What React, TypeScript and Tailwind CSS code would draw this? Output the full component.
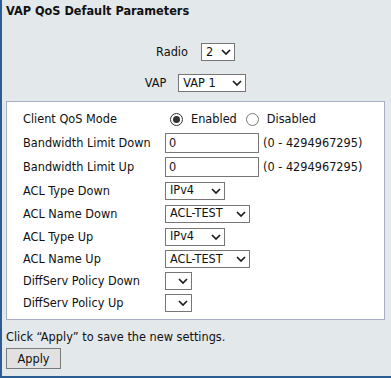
import React from "react";

function Chevron() {
  return (
    <svg width="10" height="6" viewBox="0 0 10 6" className="shrink-0">
      <path d="M1 1 L5 5 L9 1" fill="none" stroke="#1a1a1a" strokeWidth="1.7" />
    </svg>
  );
}

function Select({ value, w }: { value: string; w: string }) {
  return (
    <div className={`flex items-center justify-between h-[18px] border border-[#767676] bg-white pl-[4px] pr-[3px] ${w}`}>
      <span className="leading-none whitespace-nowrap">{value}</span>
      <Chevron />
    </div>
  );
}

function Radio({ checked }: { checked: boolean }) {
  return (
    <div
      className={`w-[13px] h-[13px] rounded-full border bg-white flex items-center justify-center ${
        checked ? "border-[#333333]" : "border-[#767676]"
      }`}
    >
      {checked && <div className="w-[7px] h-[7px] rounded-full bg-[#333333]" />}
    </div>
  );
}

function Row({ label, h, children }: { label: string; h: string; children: React.ReactNode }) {
  return (
    <div className={`flex items-center ${h}`}>
      <div className="w-[142px] shrink-0 whitespace-nowrap">{label}</div>
      <div className="flex items-center">{children}</div>
    </div>
  );
}

function TextInput({ value }: { value: string }) {
  return (
    <div className="w-[94px] h-[20px] border border-[#767676] bg-white flex items-center pl-[3px]">
      {value}
    </div>
  );
}

export default function App() {
  return (
    <div className="w-[391px] h-[378px] bg-[#e3e8eb] border-l-2 border-b-2 border-[#2b5d92] font-['DejaVu_Sans_Condensed',sans-serif] text-[12.6px] text-[#111111] leading-[16px] overflow-hidden">
      <div className="pt-[3px] pl-[4px] font-bold">VAP QoS Default Parameters</div>

      <div className="mt-[24px] flex justify-center items-center pr-[2px] h-[18px]">
        <span className="mr-[13px]">Radio</span>
        <Select value="2" w="w-[34px]" />
      </div>
      <div className="mt-[13px] flex justify-center items-center pr-[2px] h-[18px]">
        <span className="mr-[12px]">VAP</span>
        <Select value="VAP 1" w="w-[68px]" />
      </div>

      <div className="mt-[9px] ml-[4px] w-[379px] h-[219px] bg-white border border-[#a9adc6] pt-[5px] pl-[16px]">
        <Row label="Client QoS Mode" h="h-[24px]">
          <div className="ml-[5px]">
            <Radio checked />
          </div>
          <span className="ml-[8px]">Enabled</span>
          <div className="ml-[9px]">
            <Radio checked={false} />
          </div>
          <span className="ml-[8px]">Disabled</span>
        </Row>
        <Row label="Bandwidth Limit Down" h="h-[24px]">
          <TextInput value="0" />
          <span className="ml-[4px]">(0 - 4294967295)</span>
        </Row>
        <Row label="Bandwidth Limit Up" h="h-[24px]">
          <TextInput value="0" />
          <span className="ml-[4px]">(0 - 4294967295)</span>
        </Row>
        <Row label="ACL Type Down" h="h-[23px]">
          <Select value="IPv4" w="w-[60px]" />
        </Row>
        <Row label="ACL Name Down" h="h-[23px]">
          <Select value="ACL-TEST" w="w-[85px]" />
        </Row>
        <Row label="ACL Type Up" h="h-[23px]">
          <Select value="IPv4" w="w-[60px]" />
        </Row>
        <Row label="ACL Name Up" h="h-[22px]">
          <Select value="ACL-TEST" w="w-[85px]" />
        </Row>
        <Row label="DiffServ Policy Down" h="h-[22px]">
          <Select value="" w="w-[27px]" />
        </Row>
        <Row label="DiffServ Policy Up" h="h-[22px]">
          <Select value="" w="w-[27px]" />
        </Row>
      </div>

      <div className="mt-[9px] pl-[4px]">Click “Apply” to save the new settings.</div>
      <div className="mt-[3px] pl-[4px]">
        <div className="w-[55px] h-[21px] bg-[#e1e1e1] border border-[#7a7a7a] flex items-center justify-center">
          Apply
        </div>
      </div>
    </div>
  );
}
